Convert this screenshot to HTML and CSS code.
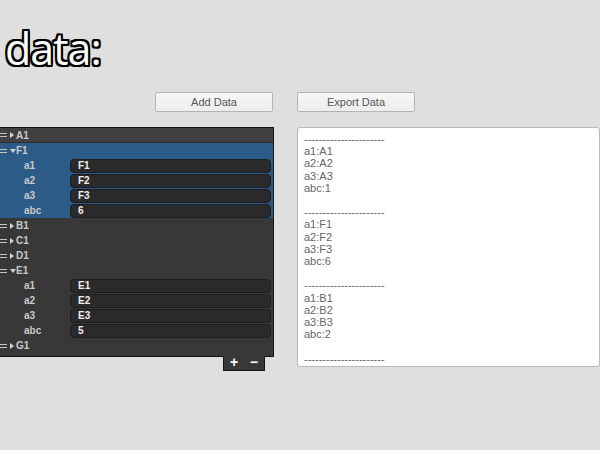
FILE: index.html
```html
<!DOCTYPE html>
<html lang="en">
<head>
    <meta charset="UTF-8">
    <title>data:</title>
    <link rel="stylesheet" href="styles.css">
</head>
<body>
    <h1 class="title">data:</h1>

    <div class="toolbar">
        <button class="btn">Add Data</button>
        <button class="btn">Export Data</button>
    </div>

    <div class="main">
        <div class="tree-wrap">
            <div class="tree">
                <div class="row head"><span class="grip"></span><span class="arrow"></span>A1</div>
                <div class="group open">
                    <div class="row"><span class="grip"></span><span class="arrow down"></span>F1</div>
                    <div class="row field"><span class="key">a1</span><span class="val">F1</span></div>
                    <div class="row field"><span class="key">a2</span><span class="val">F2</span></div>
                    <div class="row field"><span class="key">a3</span><span class="val">F3</span></div>
                    <div class="row field"><span class="key">abc</span><span class="val">6</span></div>
                </div>
                <div class="row"><span class="grip"></span><span class="arrow"></span>B1</div>
                <div class="row"><span class="grip"></span><span class="arrow"></span>C1</div>
                <div class="row"><span class="grip"></span><span class="arrow"></span>D1</div>
                <div class="row"><span class="grip"></span><span class="arrow down"></span>E1</div>
                <div class="row field"><span class="key">a1</span><span class="val">E1</span></div>
                <div class="row field"><span class="key">a2</span><span class="val">E2</span></div>
                <div class="row field"><span class="key">a3</span><span class="val">E3</span></div>
                <div class="row field"><span class="key">abc</span><span class="val">5</span></div>
                <div class="row"><span class="grip"></span><span class="arrow"></span>G1</div>
            </div>
            <div class="tree-foot">
                <span>+</span>
                <span>&minus;</span>
            </div>
        </div>

        <pre class="output">----------------------
a1:A1
a2:A2
a3:A3
abc:1

----------------------
a1:F1
a2:F2
a3:F3
abc:6

----------------------
a1:B1
a2:B2
a3:B3
abc:2

----------------------</pre>
    </div>
</body>
</html>
```

FILE: styles.css
```css
body {
    margin: 0;
    background-color: #dfdfdf;
    font-family: "Liberation Sans", Arial, sans-serif;
    overflow: hidden;
}
.title {
    margin: 29px 0 0 5px;
    height: 40px;
    font-family: "Open Sans", sans-serif;
    font-size: 43px;
    font-weight: normal;
    line-height: 40px;
    letter-spacing: -1px;
    color: #fff;
    text-shadow:
        -2px -2px 0 #000, 0 -2px 0 #000, 2px -2px 0 #000,
        -2px 0 0 #000, 2px 0 0 #000,
        -2px 2px 0 #000, 0 2px 0 #000, 2px 2px 0 #000,
        -1px -2px 0 #000, 1px 2px 0 #000;
}
.toolbar {
    display: flex;
    gap: 24px;
    margin: 23px 0 0 155px;
}
.btn {
    width: 118px;
    height: 20px;
    padding: 0;
    font-family: "Liberation Sans", Arial, sans-serif;
    font-size: 11px;
    color: #555;
    background: linear-gradient(#f7f7f7, #ededed);
    border: 1px solid #b4b4b4;
    border-radius: 2px;
}
.main {
    display: flex;
    gap: 23px;
    margin-top: 15px;
    align-items: flex-start;
}
.tree-wrap {
    width: 274px;
    flex-shrink: 0;
}
.tree {
    background-color: #383838;
    border: 1px solid #151515;
    border-left: none;
    padding-bottom: 3px;
    font-size: 10px;
    font-weight: bold;
    color: #c9c9c9;
}
.row {
    display: flex;
    align-items: center;
    height: 15px;
}
.row.head {
    height: 14px;
    background-color: #414141;
    border-bottom: 1px solid #2e2e2e;
}
.group.open {
    background-color: #2b5b86;
}
.grip {
    width: 7px;
    height: 4px;
    border-top: 1px solid #c4c4c4;
    border-bottom: 1px solid #c4c4c4;
    box-sizing: border-box;
    margin-right: 3px;
}
/* foldout triangles */
.arrow {
    width: 0;
    height: 0;
    margin-right: 2px;
    border-top: 3px solid transparent;
    border-bottom: 3px solid transparent;
    border-left: 4px solid #d4d4d4;
}
.arrow.down {
    border-left: 3px solid transparent;
    border-right: 3px solid transparent;
    border-top: 4px solid #d4d4d4;
    border-bottom: none;
    margin-right: 0;
}
.key {
    width: 46px;
    padding-left: 24px;
}
.val {
    flex: 1;
    height: 12px;
    margin-right: 2px;
    padding-left: 7px;
    line-height: 12px;
    background-color: #2a2a2a;
    border: 1px solid #1e1e1e;
    border-radius: 4px;
    color: #eee;
}
.tree-foot {
    display: flex;
    justify-content: space-between;
    width: 28px;
    height: 14px;
    margin: -1px 0 0 223px;
    padding: 0 6px;
    background-color: #383838;
    border: 1px solid #151515;
    border-top: none;
    color: #fff;
    font-size: 14px;
    font-weight: bold;
    line-height: 13px;
}
.output {
    width: 320px;
    height: 228px;
    margin: 0;
    padding: 5px 6px;
    background-color: #fff;
    border: 1px solid #b9b9b9;
    border-radius: 3px;
    font-family: "Liberation Sans", Arial, sans-serif;
    font-size: 11px;
    line-height: 12.2px;
    color: #666;
}
```
